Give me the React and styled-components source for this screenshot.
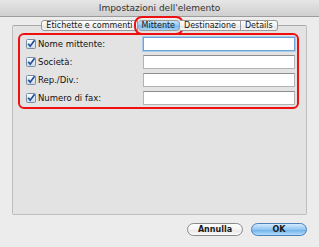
import React from "react";
import styled, { createGlobalStyle } from "styled-components";

const GlobalStyle = createGlobalStyle`
  html, body {
    margin: 0;
    padding: 0;
    background: #ececec;
  }
  * {
    box-sizing: border-box;
  }
`;

const FONT = `"DejaVu Sans", "Liberation Sans", sans-serif`;

const fields = [
  { label: "Nome mittente:", focused: true },
  { label: "Società:" },
  { label: "Rep./Div.:" },
  { label: "Numero di fax:" },
];

const tabs = ["Etichette e commenti", "Mittente", "Destinazione", "Details"];

function CheckMark() {
  return (
    <svg width="10" height="10" viewBox="0 0 10 10">
      <defs>
        <linearGradient id="cb" x1="0" y1="0" x2="0" y2="1">
          <stop offset="0" stopColor="#ffffff" />
          <stop offset="1" stopColor="#c9d7e6" />
        </linearGradient>
      </defs>
      <rect x="0.5" y="0.5" width="9" height="9" rx="1" fill="url(#cb)" stroke="#7d8da0" />
      <path d="M2.2 4.8 L4.2 7.2 L8.6 1.2" fill="none" stroke="#1f4f9a" strokeWidth="1.7" />
    </svg>
  );
}

function App() {
  return (
    <Window>
      <GlobalStyle />
      <TitleBar>Impostazioni dell'elemento</TitleBar>
      <Body>
        <TabsRow>
          {tabs.map((t, i) => (
            <Tab key={t} $active={i === 1} $first={i === 0} $last={i === tabs.length - 1}>
              {t}
            </Tab>
          ))}
        </TabsRow>
        <Panel>
          <Group>
            {fields.map((f) => (
              <Row key={f.label}>
                <CheckWrap>
                  <CheckMark />
                </CheckWrap>
                <Label>{f.label}</Label>
                <Field $focused={f.focused} />
              </Row>
            ))}
          </Group>
        </Panel>
        <Footer>
          <Button>Annulla</Button>
          <Button $primary>OK</Button>
        </Footer>
      </Body>
    </Window>
  );
}

const Window = styled.div`
  width: 319px;
  height: 247px;
  background: #ececec;
  display: flex;
  flex-direction: column;
  font-family: ${FONT};
  color: #111;
  overflow: hidden;
`;

const TitleBar = styled.div`
  height: 17px;
  flex-shrink: 0;
  display: flex;
  align-items: center;
  justify-content: center;
  font-size: 9px;
  color: #333;
  background: linear-gradient(#e6e6e6, #cfcfcf);
  border-bottom: 1px solid #9c9c9c;
`;

const Body = styled.div`
  flex: 1;
  display: flex;
  flex-direction: column;
  padding: 3px 12px 11px;
`;

const TabsRow = styled.div`
  display: flex;
  justify-content: center;
  height: 11px;
  margin-bottom: -6px;
  position: relative;
  z-index: 1;
`;

const Tab = styled.div`
  height: 11px;
  padding: 0 4px;
  display: flex;
  align-items: center;
  font-size: 8px;
  color: #1a1a1a;
  border: 1px solid #9a9a9a;
  border-left-width: ${(p) => (p.$first ? "1px" : "0")};
  border-radius: ${(p) =>
    p.$active ? "4px" : p.$first ? "3px 0 0 3px" : p.$last ? "0 3px 3px 0" : "0"};
  background: ${(p) =>
    p.$active
      ? "linear-gradient(#cfe6fb, #8ec3f0 50%, #6db1ec 51%, #a9d6fa)"
      : "linear-gradient(#ffffff, #f1f1f1 50%, #e4e4e4 51%, #f4f4f4)"};
  outline: ${(p) => (p.$active ? "2px solid #ee1111" : "none")};
  outline-offset: 2px;
`;

const Panel = styled.div`
  height: 190px;
  background: #e3e3e3;
  border: 1px solid #bdbdbd;
  border-top-color: #a8a8a8;
  border-radius: 2px;
  padding: 7px 7px 0 5px;
`;

const Group = styled.div`
  border: 2px solid #f01010;
  border-radius: 6px;
  display: flex;
  flex-direction: column;
`;

const Row = styled.div`
  height: 18px;
  display: flex;
  align-items: center;
  padding: 0 2px 0 6px;
`;

const CheckWrap = styled.span`
  width: 10px;
  height: 10px;
  display: flex;
  margin-right: 2px;
`;

const Label = styled.span`
  font-size: 8.5px;
  color: #111;
  flex: 1;
`;

const Field = styled.div`
  width: 152px;
  height: 14px;
  background: #fff;
  border: 1px solid ${(p) => (p.$focused ? "#6fa3d8" : "#b3b3b3")};
  border-top-color: ${(p) => (p.$focused ? "#6fa3d8" : "#8e8e8e")};
  box-shadow: ${(p) => (p.$focused ? "0 0 0 1px #a9cbee" : "none")};
`;

const Footer = styled.div`
  display: flex;
  justify-content: flex-end;
  gap: 8px;
  padding-top: 8px;
`;

const Button = styled.div`
  width: 56px;
  height: 13px;
  border-radius: 7px;
  display: flex;
  align-items: center;
  justify-content: center;
  font-size: 8px;
  font-weight: bold;
  color: #1a1a1a;
  border: 1px solid ${(p) => (p.$primary ? "#4d7fb8" : "#8a8a8a")};
  background: ${(p) =>
    p.$primary
      ? "linear-gradient(#d3ebfd, #8fc5f2 50%, #6aaee9 51%, #b3dcfb)"
      : "linear-gradient(#ffffff, #f4f4f4 50%, #e6e6e6 51%, #fafafa)"};
`;

export default App;
